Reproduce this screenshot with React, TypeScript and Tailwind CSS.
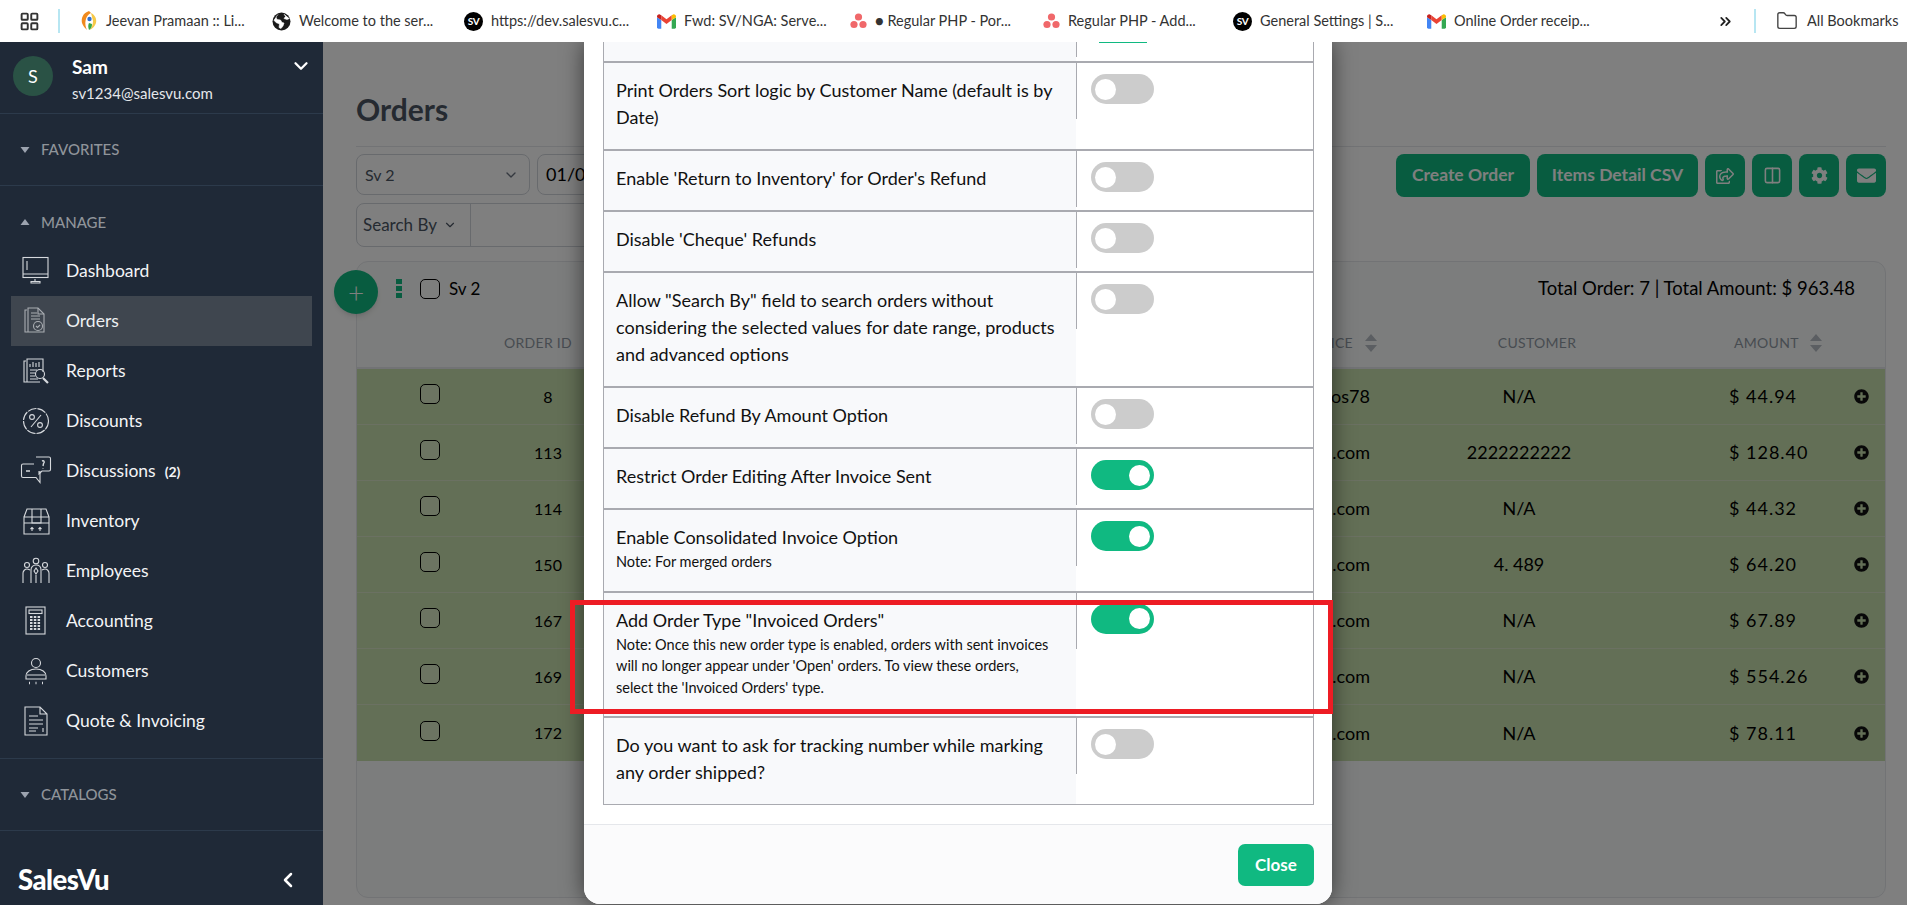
import React from "react";
import { ChevronDown, ChevronLeft, ChevronsRight, Columns2, Folder, LayoutGrid } from "lucide-react";
import { FaCog, FaEnvelope, FaPlusCircle, FaRegShareSquare } from "react-icons/fa";

const Sv = () => (
  <span className="flex h-[19px] w-[19px] shrink-0 items-center justify-center rounded-full bg-black text-[10px] font-bold tracking-tighter text-white">SV</span>
);
const Gmail = () => (
  <svg width="19" height="15" viewBox="0 0 20 15" className="shrink-0">
    <path d="M0 3v10.5A1.5 1.5 0 0 0 1.5 15H4.500V6z" fill="#4285f4" />
    <path d="M15.500 6v9h3a1.500 1.500 0 0 0 1.500-1.500V3z" fill="#34a853" />
    <path d="M4.500 6 10 10l5.500-4V1l-5.500 4-5.500-4z" fill="#ea4335" />
    <path d="M0 3l4.500 3V1L3 0C1.500-.500 0 .8 0 2z" fill="#c5221f" />
    <path d="M15.500 1v5L20 3V2c0-1.200-1.500-2.500-3-2z" fill="#fbbc04" />
  </svg>
);
const Asana = () => (
  <svg width="17" height="16" viewBox="0 0 17 16" className="shrink-0">
    <circle cx="8.500" cy="4" r="3.600" fill="#f0686a" />
    <circle cx="4" cy="11.500" r="3.600" fill="#f0686a" />
    <circle cx="13" cy="11.500" r="3.600" fill="#f0686a" />
  </svg>
);
const Jeevan = () => (
  <svg width="18" height="22" viewBox="0 0 18 22" className="shrink-0">
    <path d="M9 1C3 3 1 8 2 13c1 3 3 5 5 7C4 14 5 6 11 3z" fill="#f08a1d" />
    <path d="M11 3c4 2 6 6 5 10-1 3-3 5-6 7 2-3 3-6 3-9z" fill="#f7c948" />
    <path d="M9 20c-1-3-1-5 0-7l3 1c0 3-1 5-3 6z" fill="#3aa545" />
    <circle cx="9.500" cy="9" r="2.200" fill="#2f6fd0" />
  </svg>
);
const Globe = () => (
  <svg width="19" height="19" viewBox="0 0 19 19" className="shrink-0">
    <circle cx="9.500" cy="9.500" r="9" fill="#1a1a1a" />
    <path d="M6 2.500 4 5l1 2.500 3.500.5 1.500 2.500 2 .5-1 3-2 2.500L7 15.500 7.500 12 4 10.500 1.800 8M12 2l1.500 2.500L12 6.500l3 1 2.500-1" fill="#fff" stroke="#fff" strokeWidth=".6" />
  </svg>
);

const bookmarks: { icon: React.ReactNode; text: string; w: string }[] = [
  { icon: <Jeevan />, text: "Jeevan Pramaan :: Li...", w: "w-[192px]" },
  { icon: <Globe />, text: "Welcome to the ser...", w: "w-[192px]" },
  { icon: <Sv />, text: "https://dev.salesvu.c...", w: "w-[193px]" },
  { icon: <Gmail />, text: "Fwd: SV/NGA: Serve...", w: "w-[193px]" },
  { icon: <Asana />, text: "● Regular PHP - Por...", w: "w-[193px]" },
  { icon: <Asana />, text: "Regular PHP - Add...", w: "w-[190px]" },
  { icon: <Sv />, text: "General Settings | S...", w: "w-[194px]" },
  { icon: <Gmail />, text: "Online Order receip...", w: "w-[200px]" },
];

const I = ({ children }: { children: React.ReactNode }) => (
  <svg width="32" height="32" viewBox="0 0 32 32" fill="none" stroke="currentColor" strokeWidth="1.100">{children}</svg>
);

const icons: Record<string, React.ReactNode> = {
  Dashboard: <I><rect x="3" y="2.500" width="25" height="20" /><path d="M3 19h25M7 6v9M15 24v2M11 28h9v-1.500h-9z" /></I>,
  Orders: <I><path d="M7 5H5v22h3M8 3h10l6 6v18H8z" /><path d="M11 8h6M11 11h9M11 14h9M18 3v6h6" /><circle cx="18" cy="21" r="4.500" /><path d="M16 21l1.500 1.500 2.500-2.500" /></I>,
  Reports: <I><path d="M6 6H4v21h16" /><path d="M7 27V4h16v13" /><path d="M10 12V9M13 12V7M16 12V8M19 12V7M10 15h7M10 18h5M10 21h5M10 24h8" /><circle cx="20" cy="19" r="4.500" /><path d="M23 23l5 5" strokeWidth="2.200" /></I>,
  Discounts: <I><circle cx="16" cy="16" r="12.500" strokeDasharray="9 1" /><circle cx="12" cy="12" r="2.400" /><circle cx="20" cy="20" r="2.400" /><path d="M21 10 11 22" /></I>,
  Discussions: <I><path d="M16 2h13a1.500 1.500 0 0 1 1.500 1.500v11a1.500 1.500 0 0 1-1.500 1.500h-7l-3 3v-3" /><path d="M14 9H3a1.500 1.500 0 0 0-1.500 1.500V21A1.500 1.500 0 0 0 3 22.500h13l4 5V16" /><path d="M22 6c2-1 3 1 1.500 2.500L23 11M23 13v.5M6 16h4" strokeWidth="1.400" /></I>,
  Inventory: <I><path d="M4 12h25v17H4zM4 12l3-8h19l3 8M12 4v8M21 4v8M12 12v6h9v-6" /><path d="M4 18h25M12 26v-3M10.500 24l1.500-1.500 1.500 1.500M20 26v-3M18.500 24l1.500-1.500 1.500 1.500" /></I>,
  Employees: <I><circle cx="16" cy="6" r="2.800" /><circle cx="7" cy="10" r="2.500" /><circle cx="25" cy="10" r="2.500" /><path d="M11 28V15c0-3 2-5 5-5s5 2 5 5v13M16 13l-2 3 2 3 2-3zM3 28V18c0-2 2-4 4-4 1 0 2 .5 3 1M29 28V18c0-2-2-4-4-4-1 0-2 .5-3 1M16 20v8" /></I>,
  Accounting: <I><rect x="6" y="2" width="19" height="27" /><rect x="9" y="5" width="13" height="3.500" /><path d="M10 12h11M10 15h11M10 18h11M10 21h11M10 24h11" strokeWidth="2" strokeDasharray="2.500 1.300" /></I>,
  Customers: <I><circle cx="16" cy="8" r="4.500" /><path d="M6 24v-3c0-4 4-7 10-7s10 3 10 7v3zM7 20h18" /><path d="M9 28h1M15.500 28h1M22 28h1" strokeWidth="2.500" /></I>,
  "Quote & Invoicing": <I><path d="M5 2h15l7 7v21H5zM20 2v7h7" /><path d="M9 11h9M9 15h14M9 19h14M9 23h9M9 26h7M23 23v4" /></I>,
};

const nav = ["Dashboard", "Orders", "Reports", "Discounts", "Discussions", "Inventory", "Employees", "Accounting", "Customers", "Quote & Invoicing"];

const Caret = ({ up }: { up?: boolean }) => (
  <svg width="10" height="6" viewBox="0 0 10 6" className="shrink-0">
    <path d={up ? "M5 0l4.500 6h-9z" : "M0.500 0h9L5 6z"} fill="#9ca3af" />
  </svg>
);

const Section = ({ label, up }: { label: string; up?: boolean }) => (
  <div className="flex items-center gap-[11px] pl-[20px] text-[15px] font-medium uppercase text-[#8f949a]">
    <Caret up={up} />
    {label}
  </div>
);

const Sidebar = () => (
  <aside className="flex w-[323px] shrink-0 flex-col bg-[#1f2937] text-white">
    <div className="flex h-[72px] border-b border-[#2c3a4b] pl-[13px] pr-[11px] pt-[14px]">
      <div className="flex h-[40px] w-[40px] shrink-0 items-center justify-center rounded-full bg-[#2a5245] text-[18px]">S</div>
      <div className="ml-[19px] flex-1">
        <div className="text-[19px] font-bold leading-[22px]">Sam</div>
        <div className="mt-[6px] text-[15px] leading-[18px] text-[#e5e7eb]">sv1234@salesvu.com</div>
      </div>
      <ChevronDown size={22} strokeWidth={2.500} className="mt-[-1px]" />
    </div>
    <div className="flex h-[72px] items-center border-b border-[#2c3a4b]"><Section label="Favorites" /></div>
    <div className="flex h-[573px] flex-col border-b border-[#2c3a4b]">
      <div className="flex h-[60px] items-start pt-[25px]"><Section label="Manage" up /></div>
      <div className="flex flex-col px-[11px]">
        {nav.map((n) => (
          <div key={n} className={`flex h-[50px] items-center text-[17.500px] ${n === "Orders" ? "bg-[#3f464f] text-[#eef0f2]" : "text-[#f3f4f6]"}`}>
            <span className={`ml-[9px] flex w-[46px] shrink-0 ${n === "Orders" ? "text-[#a9adb2]" : "text-[#d6d9dd]"}`}>{icons[n]}</span>
            {n === "Discussions" ? <>{n}<span className="ml-[9px] text-[14px] font-bold">(2)</span></> : n}
          </div>
        ))}
      </div>
    </div>
    <div className="flex h-[72px] items-center border-b border-[#2c3a4b]"><Section label="Catalogs" /></div>
    <div className="flex flex-1 items-start justify-between pl-[18px] pr-[23px] pt-[31px]">
      <span className="text-[27.500px] font-black leading-[36px] tracking-[-0.5px]">SalesVu</span>
      <ChevronLeft size={24} strokeWidth={2.500} className="mt-[6px]" />
    </div>
  </aside>
);

const Sort = () => (
  <svg width="12" height="18" viewBox="0 0 12 18" className="shrink-0">
    <path d="M6 0l6 7H0zM0 11h12l-6 7z" fill="#b7bdc4" />
  </svg>
);

const Box = () => <span className="block h-[20px] w-[20px] rounded-[5px] border border-black bg-white/30" />;

const rows = [
  ["8", "salesvupos78", "N/A", "$ 44.94"],
  ["113", "support@salesvu.com", "2222222222", "$ 128.40"],
  ["114", "support@salesvu.com", "N/A", "$ 44.32"],
  ["150", "support@salesvu.com", "4. 489", "$ 64.20"],
  ["167", "support@salesvu.com", "N/A", "$ 67.89"],
  ["169", "support@salesvu.com", "N/A", "$ 554.26"],
  ["172", "support@salesvu.com", "N/A", "$ 78.11"],
];

const GreenBtn = ({ children, w }: { children: React.ReactNode; w: string }) => (
  <button className={`flex h-[43px] ${w} shrink-0 items-center justify-center rounded-[8px] bg-[#10b981] text-[17.500px] font-bold text-[#fff]`}>{children}</button>
);

const Main = () => (
  <main className="relative flex-1 overflow-hidden bg-white">
    <div className="flex h-full flex-col pl-[33px] pr-[21px]">
      <div className="flex h-[105px] items-end border-b border-[#e5e7eb] pb-[17px]">
        <h1 className="text-[30px] font-bold leading-[40px] text-[#4b5563]">Orders</h1>
      </div>
      <div className="mt-[7px] flex">
        <div className="flex h-[41px] w-[174px] items-center justify-between rounded-[8px] border border-[#d1d5db] pl-[8px] pr-[10px] text-[16px] text-[#4b5563]">
          <span>Sv 2</span><ChevronDown size={16} color="#6b7280" />
        </div>
        <div className="ml-[7px] flex h-[41px] w-[210px] items-center rounded-[8px] border border-[#d1d5db] pl-[8px] text-[18px] text-black">01/01/2024</div>
        <div className="ml-auto flex gap-[7px]">
          <GreenBtn w="w-[134px]">Create Order</GreenBtn>
          <GreenBtn w="w-[161px]">Items Detail CSV</GreenBtn>
          <GreenBtn w="w-[40px]"><FaRegShareSquare size={18} /></GreenBtn>
          <GreenBtn w="w-[40px]"><Columns2 size={19} /></GreenBtn>
          <GreenBtn w="w-[40px]"><FaCog size={17} /></GreenBtn>
          <GreenBtn w="w-[40px]"><FaEnvelope size={19} /></GreenBtn>
        </div>
      </div>
      <div className="mt-[6px] flex h-[44px] w-[700px] rounded-[8px] border border-[#d1d5db]">
        <div className="flex w-[114px] items-center gap-[6px] border-r border-[#d1d5db] pl-[6px] text-[17px] text-[#4b5563]">
          <span>Search By</span><ChevronDown size={14} />
        </div>
      </div>
      <div className="relative mt-[14px] flex h-[637px] flex-col rounded-[12px] border border-[#e5e7eb] bg-[#f9fbfa]">
        <div className="absolute left-[-23px] top-[8px] flex h-[44px] w-[44px] items-center justify-center rounded-full bg-[#10b981] text-[28px] font-light leading-none text-white shadow-md">+</div>
        <div className="flex h-[59px] items-center pb-[6px] pl-[39px] pr-[30px]">
          <svg width="6" height="19" viewBox="0 0 6 19" className="shrink-0"><path d="M0 0h6v5H0zM0 7h6v5H0zM0 14h6v5H0z" fill="#10b981" /></svg>
          <span className="ml-[18px]"><Box /></span>
          <span className="ml-[9px] text-[17px] text-black">Sv 2</span>
          <span className="ml-auto text-[18.500px] text-black">Total Order: 7 | Total Amount: $ 963.48</span>
        </div>
        <div className="flex h-[48px] items-center border-b-2 border-[#e5e7eb] pb-[3px] text-[14px] uppercase tracking-[0.3px] text-[#8f98a3]">
          <span className="w-[147px] shrink-0" />
          <span className="w-[90px] shrink-0">Order ID</span>
          <span className="flex w-[783px] shrink-0 items-center justify-end gap-[12px]">Invoice <Sort /></span>
          <span className="w-[320px] shrink-0 text-center">Customer</span>
          <span className="flex w-[126px] shrink-0 items-center gap-[11px] pl-[37px]">Amount <Sort /></span>
        </div>
        {rows.map((r, i) => (
          <div key={r[0]} className={`flex h-[56px] items-center bg-[#c7dfad] text-[18px] text-black ${i < 6 ? "border-b border-[#d6e3c4]" : ""}`}>
            <span className="w-[63px] shrink-0" />
            <span className="w-[65px] shrink-0 pb-[5px]"><Box /></span>
            <span className="w-[126px] shrink-0 text-center text-[16px]">{r[0]}</span>
            <span className="w-[759px] shrink-0 text-right">{r[1]}</span>
            <span className="w-[298px] shrink-0 text-center">{r[2]}</span>
            <span className="w-[180px] shrink-0 pl-[61px] tracking-[1px] whitespace-nowrap">{r[3]}</span>
            <span className="ml-[6px] shrink-0"><FaPlusCircle size={15} color="#111" /></span>
          </div>
        ))}
      </div>
    </div>
    <div className="absolute inset-0 bg-black/50" />
  </main>
);

const Toggle = ({ on }: { on?: boolean }) => (
  <div className={`flex h-[30px] w-[63px] items-center rounded-full px-[4px] ${on ? "justify-end bg-[#10b981]" : "justify-start bg-[#cccccc]"}`}>
    <span className="h-[21px] w-[21px] rounded-full bg-white" />
  </div>
);

const settings: { lines: string[]; note?: string[]; on?: boolean }[] = [
  { lines: ["Print Orders Sort logic by Customer Name (default is by", "Date)"] },
  { lines: ["Enable 'Return to Inventory' for Order's Refund"] },
  { lines: ["Disable 'Cheque' Refunds"] },
  { lines: ['Allow "Search By" field to search orders without', "considering the selected values for date range, products", "and advanced options"] },
  { lines: ["Disable Refund By Amount Option"] },
  { lines: ["Restrict Order Editing After Invoice Sent"], on: true },
  { lines: ["Enable Consolidated Invoice Option"], note: ["Note: For merged orders"], on: true },
  {
    lines: ['Add Order Type "Invoiced Orders"'],
    note: [
      "Note: Once this new order type is enabled, orders with sent invoices",
      "will no longer appear under 'Open' orders. To view these orders,",
      "select the 'Invoiced Orders' type.",
    ],
    on: true,
  },
  { lines: ["Do you want to ask for tracking number while marking", "any order shipped?"] },
];

const Modal = () => (
  <div className="absolute bottom-[1px] left-[584px] top-0 flex w-[748px] flex-col overflow-hidden rounded-b-[16px] bg-white shadow-[0_0_22px_rgba(0,0,0,0.55)]">
    <div className="mx-[19px] flex w-[711px] flex-col border-x border-b border-[#a9aab0]">
      <div className="flex h-[19px]">
        <div className="w-[472px] shrink-0 bg-[#f8f9fb]" />
        <div className="h-[15px] border-l border-[#a9aab0] pl-[22px]"><div className="h-[1px] w-[48px] bg-[#10b981]" /></div>
      </div>
      {settings.map((s) => (
        <div key={s.lines[0]} className="flex border-t-2 border-[#a9aab0]">
          <div className="w-[472px] shrink-0 bg-[#f8f9fb] pb-[18px] pl-[12px] pt-[14px] text-[18px] leading-[27px] text-[#111] whitespace-nowrap">
            {s.lines.map((l) => <div key={l}>{l}</div>)}
            {s.note && <div className="text-[14.500px] leading-[21.500px]">{s.note.map((l) => <div key={l}>{l}</div>)}</div>}
          </div>
          <div className="h-[56px] border-l border-[#a9aab0] pl-[14px] pt-[11px]"><Toggle on={s.on} /></div>
        </div>
      ))}
    </div>
    <div className="mt-[19px] flex flex-1 items-start justify-end border-t border-[#e5e7eb] bg-[#fbfbfc] pr-[18px] pt-[19px]">
      <button className="flex h-[42px] w-[76px] items-center justify-center rounded-[7px] bg-[#10b981] text-[17px] font-bold text-white">Close</button>
    </div>
  </div>
);

export default function App() {
  return (
    <div className="flex h-[905px] w-[1907px] flex-col overflow-hidden bg-white font-['Lato',sans-serif]">
      <div className="flex h-[42px] shrink-0 items-center bg-white text-[14.500px] text-[#333]">
        <LayoutGrid size={21} strokeWidth={2.200} color="#333" className="ml-[19px] shrink-0" />
        <span className="ml-[18px] h-[24px] w-[2px] shrink-0 bg-[#b7e6f2]" />
        <div className="ml-[20px] flex">
          {bookmarks.map((b, i) => (
            <div key={i} className={`flex ${b.w} shrink-0 items-center gap-[8px] whitespace-nowrap`}>
              {b.icon}<span>{b.text}</span>
            </div>
          ))}
        </div>
        <ChevronsRight size={17} strokeWidth={2.500} color="#222" className="ml-[90px] shrink-0" />
        <span className="ml-[20px] h-[24px] w-[2px] shrink-0 bg-[#b7e6f2]" />
        <Folder size={22} strokeWidth={1.500} color="#444" className="ml-[20px] shrink-0" />
        <span className="ml-[9px] whitespace-nowrap">All Bookmarks</span>
      </div>
      <div className="relative flex flex-1 overflow-hidden">
        <Sidebar />
        <Main />
        <Modal />
        <div className="absolute left-[570px] top-[558px] h-[114px] w-[763px] border-[5px] border-[#ed1c24]" />
      </div>
    </div>
  );
}
